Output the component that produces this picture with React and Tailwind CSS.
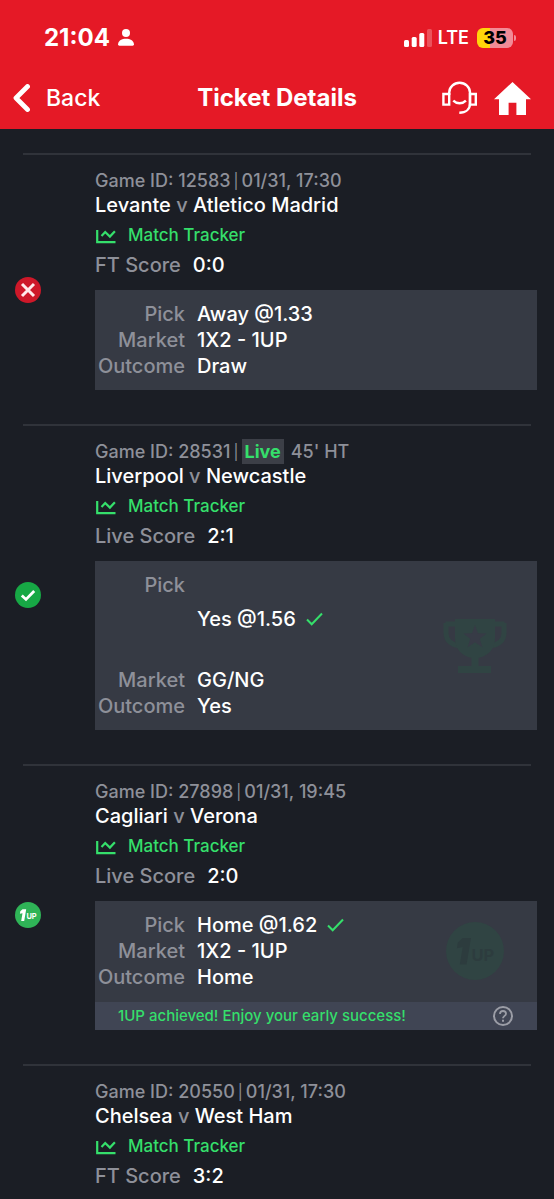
import React from "react";

const picks = [
  {
    id: "12583",
    time: "01/31, 17:30",
    home: "Levante",
    away: "Atletico Madrid",
    scoreLabel: "FT Score",
    score: "0:0",
    status: "lost",
    pick: "Away @1.33",
    market: "1X2 - 1UP",
    outcome: "Draw",
  },
  {
    id: "28531",
    live: "45' HT",
    home: "Liverpool",
    away: "Newcastle",
    scoreLabel: "Live Score",
    score: "2:1",
    status: "won",
    pick: "Yes @1.56",
    hit: true,
    tall: true,
    market: "GG/NG",
    outcome: "Yes",
  },
  {
    id: "27898",
    time: "01/31, 19:45",
    home: "Cagliari",
    away: "Verona",
    scoreLabel: "Live Score",
    score: "2:0",
    status: "oneup",
    pick: "Home @1.62",
    hit: true,
    market: "1X2 - 1UP",
    outcome: "Home",
    notice: "1UP achieved! Enjoy your early success!",
  },
  {
    id: "20550",
    time: "01/31, 17:30",
    home: "Chelsea",
    away: "West Ham",
    scoreLabel: "FT Score",
    score: "3:2",
  },
];

function StatusBar() {
  return (
    <div className="flex h-[75px] items-center justify-between pl-11 pr-[38px]">
      <div className="flex items-center gap-2">
        <span className="text-[24px] font-bold leading-7">21:04</span>
        <svg width="16" height="17" viewBox="0 0 16 17" fill="currentColor" aria-hidden="true">
          <circle cx="8" cy="4" r="4" />
          <path d="M0 15.2C.6 11.500 3.800 9.800 8 9.800s7.400 1.700 8 5.400c.1.900-.5 1.500-1.300 1.500H1.300C.5 16.700-.1 16.100 0 15.200z" />
        </svg>
      </div>
      <div className="flex items-center gap-2">
        <div className="flex items-center gap-[6px]">
          <svg width="28" height="18" viewBox="0 0 28 18" fill="currentColor" aria-hidden="true">
            <rect x="0" y="11" width="5" height="7" rx="1.500" />
            <rect x="7.700" y="8" width="5" height="10" rx="1.500" />
            <rect x="15.300" y="4" width="5" height="14" rx="1.500" />
            <rect x="23" y="0" width="5" height="18" rx="1.500" opacity=".25" />
          </svg>
          <span className="text-[18px] font-semibold leading-6">LTE</span>
        </div>
        <div className="flex items-center gap-px">
          <span className="flex h-5 w-9 items-center justify-center rounded-[6px] bg-linear-to-r from-[#ffd60a] from-35% to-[#f28b96] to-35% text-[18px] font-extrabold leading-5 text-black">
            35
          </span>
          <span className="h-[6px] w-[2px] rounded-r-full bg-[#f28b96]" />
        </div>
      </div>
    </div>
  );
}

function NavBar() {
  return (
    <div className="grid h-[54px] grid-cols-[1fr_auto_1fr] items-center px-[13px] pb-2">
      <button type="button" className="flex items-center gap-4 justify-self-start text-[23px] font-medium leading-8">
        <svg width="17" height="28" viewBox="0 0 17 28" fill="none" stroke="currentColor" strokeWidth="4.800" strokeLinecap="round" strokeLinejoin="round" aria-hidden="true">
          <path d="M14.500 2.500 3 14l11.500 11.500" />
        </svg>
        Back
      </button>
      <h1 className="text-[24px] font-bold leading-8">Ticket Details</h1>
      <div className="flex items-center gap-4 justify-self-end pr-[10px]">
        <button type="button" aria-label="Customer support">
          <svg width="36" height="34" viewBox="0 0 36 34" fill="none" stroke="currentColor" strokeWidth="2.400" aria-hidden="true">
            <path d="M1.400 13h5.800v10.600H1.400zM28 13h5.800v10.600H28z" />
            <path d="M7.200 14v-2.500C7.200 6 12 1.700 17.600 1.700S28 6 28 11.500V22.500c0 5.500-4 9.300-10.700 9.300" />
            <path d="M11.300 19.600c3.600 3.600 9 3.600 12.600 0" />
          </svg>
        </button>
        <button type="button" aria-label="Home">
          <svg width="37" height="33" viewBox="0 0 37 33" fill="currentColor" aria-hidden="true">
            <path d="M18.500 0 37 17.300h-5V33h-9.600V20.800h-7.800V33H5V17.300H0z" />
          </svg>
        </button>
      </div>
    </div>
  );
}

function TrackerIcon() {
  return (
    <svg width="20" height="15" viewBox="0 0 20 15" fill="none" stroke="currentColor" strokeWidth="2.200" aria-hidden="true">
      <path d="M1.200 1v12.200H19.500" />
      <path d="M5.500 7 9.200 3l4.700 4.600 5-5.400" />
    </svg>
  );
}

function CheckIcon() {
  return (
    <svg width="17" height="14" viewBox="0 0 17 14" fill="none" stroke="currentColor" strokeWidth="2" aria-label="Won pick">
      <path d="m1 7.500 4.700 4.700L16 1.500" />
    </svg>
  );
}

function OneUpMark({ className, disc, ink }) {
  return (
    <svg className={className} viewBox="0 0 26 26" aria-hidden="true">
      <circle cx="13" cy="13" r="13" fill={disc} />
      <path d="M7.500 7.200H11.200L9.200 19H6.200L7.500 11.200 4.900 11.800 5.300 9.300z" fill={ink} />
      <text x="11.400" y="17.400" fontSize="7.400" fontWeight="700" fontFamily="Inter, sans-serif" fill={ink}>
        UP
      </text>
    </svg>
  );
}

function StatusIcon({ status }) {
  if (status === "oneup") return <OneUpMark className="size-[26px]" disc="#2fb457" ink="#ffffff" />;
  if (status === "won")
    return (
      <svg className="size-[26px]" viewBox="0 0 26 26" aria-label="Won">
        <circle cx="13" cy="13" r="13" fill="#17a845" />
        <path d="m6.800 13.400 4.200 4L19.200 9" fill="none" stroke="#fff" strokeWidth="2.800" />
      </svg>
    );
  if (status === "lost")
    return (
      <svg className="size-[26px]" viewBox="0 0 26 26" aria-label="Lost">
        <circle cx="13" cy="13" r="13" fill="#ce1829" />
        <path d="m7 7 12 12M19 7 7 19" stroke="#ffe9ea" strokeWidth="3" />
      </svg>
    );
  return null;
}

function Trophy() {
  return (
    <svg className="w-[64px]" viewBox="0 0 64 54" aria-hidden="true">
      <path d="M2.500 5H14M50 5h11.500M3 4v10c0 8 6 12 14 13M61 4v10c0 8-6 12-14 13" fill="none" stroke="#304443" strokeWidth="5" />
      <path d="M12 0h40v19c0 11-7 18-16.500 20v8H48v7H15v-7h13.500v-8C19 37 12 30 12 19z" fill="#304443" />
      <path d="m32 6 3 8.200 8.700.3-6.900 5.300 2.500 8.400L32 23.300l-7.300 4.900 2.500-8.400-6.900-5.300 8.700-.3z" fill="#373b46" />
    </svg>
  );
}

function Detail({ label, tall, children }) {
  return (
    <div className="flex gap-3">
      <dt className="w-[90px] text-right text-[#8e9099]">{label}</dt>
      <dd className={tall ? "flex h-[95px] items-center gap-[10px] pb-[2px]" : "flex items-center gap-[10px]"}>{children}</dd>
    </div>
  );
}

function PickPanel({ item }) {
  return (
    <section className="mt-3 bg-[#363a44]">
      <div className={item.notice ? "flex items-center justify-between pb-3 pt-[11px]" : "flex items-center justify-between py-[11px]"}>
        <dl className="text-[20px] font-medium leading-[26px] text-white">
          <Detail label="Pick" tall={item.tall}>
            <span>{item.pick}</span>
            {item.hit && (
              <span className="text-[#35df6b]">
                <CheckIcon />
              </span>
            )}
          </Detail>
          <Detail label="Market">{item.market}</Detail>
          <Detail label="Outcome">{item.outcome}</Detail>
        </dl>
        {item.status === "won" && (
          <div className="pr-[30px]">
            <Trophy />
          </div>
        )}
        {item.status === "oneup" && (
          <div className="pr-[33px]">
            <OneUpMark className="size-[58px]" disc="#304443" ink="#2d3c3e" />
          </div>
        )}
      </div>
      {item.notice && (
        <div className="flex h-7 items-center justify-between bg-[#404554] pl-[23px] pr-6 text-[15px] font-medium text-[#35df6b]">
          <p>{item.notice}</p>
          <button type="button" aria-label="About 1UP" className="text-[#9b9da6]">
            <svg width="20" height="20" viewBox="0 0 20 20" fill="none" stroke="currentColor" strokeWidth="2" aria-hidden="true">
              <circle cx="10" cy="10" r="9" />
              <path d="M7 8c0-1.900 1.300-3 3-3s3 1.100 3 2.700c0 2.100-3 2.300-3 4.600" strokeWidth="1.800" />
              <path d="M10 13.800v2" />
            </svg>
          </button>
        </div>
      )}
    </section>
  );
}

function Game({ item }) {
  return (
    <article>
      <hr className="mx-[23px] border-t-2 border-[#30333a]" />
      <div className="flex">
        <div className="flex w-[95px] shrink-0 items-center pl-[15px]">
          <StatusIcon status={item.status} />
        </div>
        <div className="min-w-0 flex-1 pb-[34px] pr-[17px] pt-[13px] font-medium">
          <div className="flex h-[25px] items-center gap-[3px] text-[18px] leading-[25px] text-[#8e9099]">
            <span>Game ID: {item.id}</span>
            <span className="text-[15px] font-normal">|</span>
            {item.live ? (
              <>
                <span className="bg-[#3c3f47] px-[3px] font-bold text-[#35df6b]">Live</span>
                <span className="pl-1">{item.live}</span>
              </>
            ) : (
              <span>{item.time}</span>
            )}
          </div>
          <h2 className="text-[20px] leading-[25px] text-white">
            {item.home} <span className="text-[#8e9099]">v</span> {item.away}
          </h2>
          <a href="#tracker" className="mt-[2px] flex h-8 items-center gap-3 pl-px text-[17px] text-[#35df6b]">
            <TrackerIcon />
            Match Tracker
          </a>
          <p className="flex gap-3 text-[20px] leading-[26px] text-[#8e9099]">
            {item.scoreLabel} <span className="text-white">{item.score}</span>
          </p>
          {item.pick && <PickPanel item={item} />}
        </div>
      </div>
    </article>
  );
}

export default function App() {
  return (
    <div className="min-h-screen bg-[#1b1e25] font-['Inter',sans-serif]">
      <header className="bg-[#e51926] text-white">
        <StatusBar />
        <NavBar />
      </header>
      <main className="pt-6">
        {picks.map((item) => (
          <Game key={item.id} item={item} />
        ))}
      </main>
    </div>
  );
}
